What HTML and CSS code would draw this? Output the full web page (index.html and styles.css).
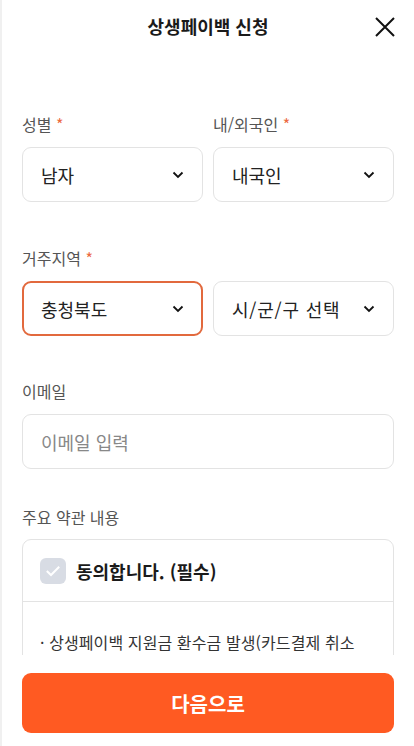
FILE: index.html
```html
<!DOCTYPE html>
<html lang="ko">
<head>
<meta charset="utf-8">
<link rel="stylesheet" href="styles.css">
</head>
<body>
<div class="page">
  <header class="header">
    <h1 class="title">상생페이백 신청</h1>
    <button class="close" aria-label="닫기">
      <svg width="20" height="20" viewBox="0 0 20 20"><path d="M1 1L19 19M19 1L1 19" stroke="#111" stroke-width="2" fill="none"/></svg>
    </button>
  </header>
  <main class="content">
    <div class="row first">
      <div class="field">
        <div class="label">성별 <span class="star">*</span></div>
        <div class="select"><span class="value">남자</span><svg class="chev" width="12" height="8" viewBox="0 0 12 8"><path d="M1.5 1.5L6 6L10.5 1.5" stroke="#111" stroke-width="1.8" fill="none"/></svg></div>
      </div>
      <div class="field">
        <div class="label">내/외국인 <span class="star">*</span></div>
        <div class="select"><span class="value">내국인</span><svg class="chev" width="12" height="8" viewBox="0 0 12 8"><path d="M1.5 1.5L6 6L10.5 1.5" stroke="#111" stroke-width="1.8" fill="none"/></svg></div>
      </div>
    </div>
    <div class="label region">거주지역 <span class="star">*</span></div>
    <div class="row">
      <div class="select active"><span class="value">충청북도</span><svg class="chev" width="12" height="8" viewBox="0 0 12 8"><path d="M1.5 1.5L6 6L10.5 1.5" stroke="#111" stroke-width="1.8" fill="none"/></svg></div>
      <div class="select"><span class="value wide">시/군/구 선택</span><svg class="chev" width="12" height="8" viewBox="0 0 12 8"><path d="M1.5 1.5L6 6L10.5 1.5" stroke="#111" stroke-width="1.8" fill="none"/></svg></div>
    </div>
    <div class="label email-label">이메일</div>
    <div class="input"><span class="placeholder">이메일 입력</span></div>
    <div class="label terms-label">주요 약관 내용</div>
    <div class="terms">
      <div class="terms-head">
        <span class="check"><svg width="16" height="12" viewBox="0 0 16 12"><path d="M1.8 6L6 10L14.2 1.8" stroke="#fff" stroke-width="2" fill="none"/></svg></span>
        <span class="agree">동의합니다. (필수)</span>
      </div>
      <div class="terms-body">
        <p>· 상생페이백 지원금 환수금 발생(카드결제 취소</p>
      </div>
    </div>
  </main>
  <footer class="footer">
    <button class="next">다음으로</button>
  </footer>
</div>
</body>
</html>
```

FILE: styles.css
```css
* { box-sizing: border-box; }
html, body { margin: 0; padding: 0; background: #fff; }
body {
  font-family: "Noto Sans CJK KR", "Noto Sans", sans-serif;
  color: #222;
}
.page {
  height: 746px;
  display: flex;
  flex-direction: column;
  border-left: 2px solid #f0f0f0;
  overflow: hidden;
}
.header {
  height: 52px;
  flex: none;
  display: flex;
  align-items: center;
  justify-content: center;
  position: relative;
}
.title {
  margin: 0;
  font-size: 18px;
  font-weight: 700;
  color: #1a1a1a;
}
.close {
  position: absolute;
  right: 19px;
  top: 17px;
  width: 20px;
  height: 20px;
  padding: 0;
  border: 0;
  background: none;
  display: flex;
}
.content {
  flex: 1;
  overflow: hidden;
  padding: 61px 20px 0 20px;
}
.row {
  display: flex;
  gap: 10px;
}
.field { flex: 1; min-width: 0; }
.label {
  font-size: 16px;
  line-height: 22px;
  color: #555;
  margin-bottom: 12px;
}
.star { color: #ec6a3f; }
.region { margin-top: 45px; }
.email-label { margin-top: 44px; margin-bottom: 12px; }
.terms-label { margin-top: 37px; margin-bottom: 11px; }
.select {
  flex: 1;
  height: 55px;
  border: 1px solid #e3e3e3;
  border-radius: 9px;
  display: flex;
  align-items: center;
  justify-content: space-between;
  padding: 0 18px 0 18px;
}
.select.active {
  border: 2px solid #e2693d;
  padding: 0 17px 0 17px;
}
.value {
  font-size: 18px;
  color: #222;
}
.value.wide { letter-spacing: 0.8px; }
.chev { flex: none; }
.input {
  height: 55px;
  border: 1px solid #e3e3e3;
  border-radius: 9px;
  display: flex;
  align-items: center;
  padding: 0 18px;
}
.placeholder { font-size: 18px; color: #888; }
.terms {
  border: 1px solid #e3e3e3;
  border-radius: 9px;
  height: 200px;
}
.terms-head {
  height: 62px;
  display: flex;
  align-items: center;
  padding: 0 17px;
  gap: 10px;
  border-bottom: 1px solid #e3e3e3;
}
.check {
  width: 26px;
  height: 26px;
  border-radius: 6px;
  background: #d8dce4;
  display: flex;
  align-items: center;
  justify-content: center;
}
.agree {
  font-size: 18px;
  font-weight: 700;
  color: #1a1a1a;
}
.terms-body { padding: 28px 17px 0 17px; }
.terms-body p {
  margin: 0;
  font-size: 16px;
  line-height: 24px;
  color: #333;
  letter-spacing: 0.1px;
}
.footer {
  flex: none;
  padding: 18px 20px 13px 20px;
}
.next {
  width: 100%;
  height: 60px;
  border: 0;
  border-radius: 9px;
  background: #ff5a22;
  color: #fff;
  font-family: "Noto Sans CJK KR", "Noto Sans", sans-serif;
  font-size: 20px;
  font-weight: 700;
}
```
